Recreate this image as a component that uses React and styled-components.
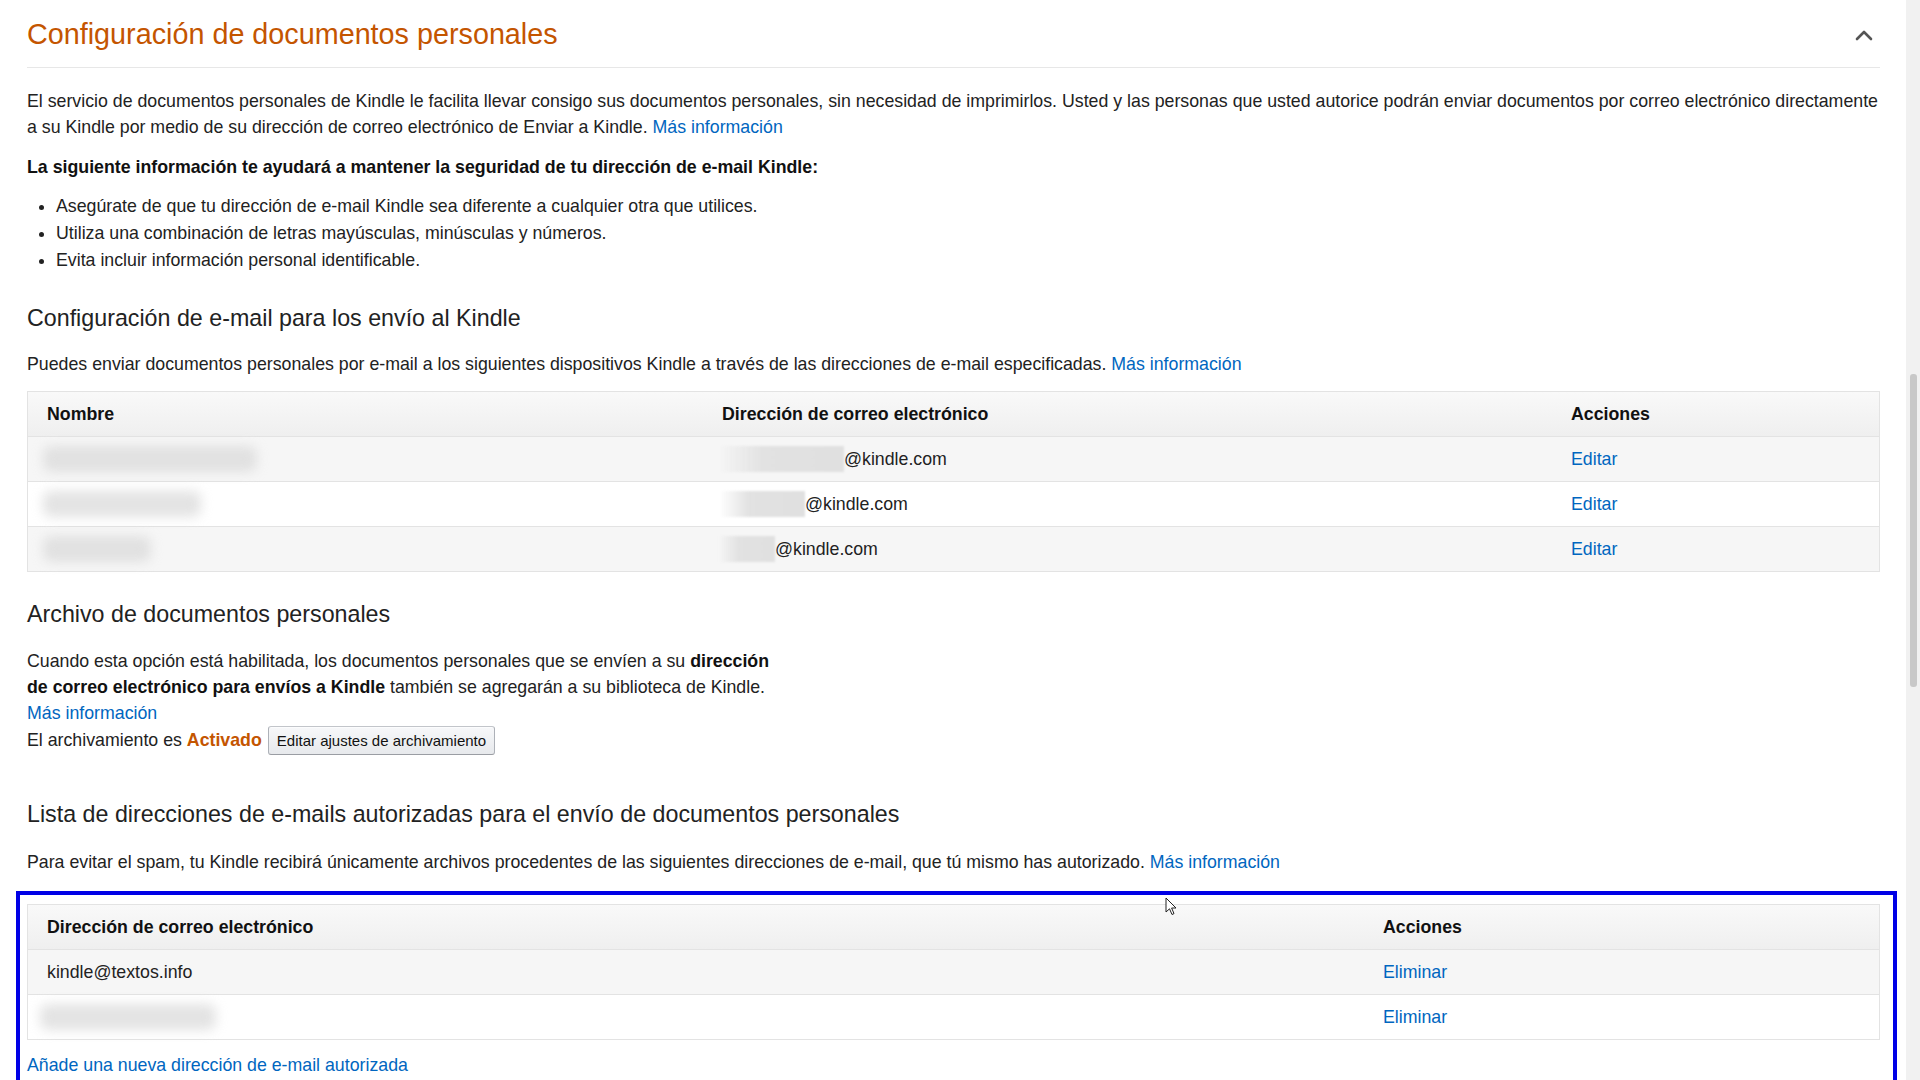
import React from 'react';
import styled, { createGlobalStyle } from 'styled-components';

const GlobalStyle = createGlobalStyle`
  html, body {
    margin: 0;
    padding: 0;
    background: #fff;
    overflow: hidden;
  }
  body {
    font-family: "Liberation Sans", Arial, sans-serif;
    font-size: 17.75px;
    line-height: 26px;
    color: #222;
  }
  * {
    box-sizing: border-box;
  }
`;

const Page = styled.div`
  position: relative;
  display: flex;
  width: 1920px;
  height: 1080px;
  overflow: hidden;
`;

const Main = styled.div`
  flex: 1;
  padding: 0 26px 0 27px;
`;

const Scrollbar = styled.div`
  width: 14px;
  background: #f1f1f1;
  padding: 374px 3px 0 4px;
`;

const Thumb = styled.div`
  height: 313px;
  background: #c8c8c8;
  border-radius: 3px;
`;

const SectionHeader = styled.div`
  height: 68px;
  display: flex;
  align-items: center;
  justify-content: space-between;
  border-bottom: 1px solid #e7e7e7;
`;

const Title = styled.h1`
  margin: 0;
  font-size: 28.75px;
  line-height: 36px;
  font-weight: 400;
  color: #c45500;
`;

const Chevron = styled.svg`
  width: 18px;
  height: 12px;
  margin-right: 7px;
  margin-top: 3px;
`;

const Paragraph = styled.p`
  margin: ${p => p.$mt || 0}px 0 0;
  max-width: ${p => (p.$narrow ? '765px' : 'none')};
`;

const Strong = styled.p`
  margin: 14px 0 0;
  font-weight: 700;
  color: #111;
`;

const Bullets = styled.ul`
  margin: 13px 0 0;
  padding-left: 29px;

  li {
    margin-bottom: 1px;
  }
`;

const SubTitle = styled.h2`
  margin: ${p => p.$mt}px 0 0;
  font-size: 23.25px;
  line-height: 30px;
  font-weight: 400;
  color: #222;
`;

const Link = styled.a`
  color: #0066c0;
  text-decoration: none;
  cursor: pointer;
  display: ${p => (p.$block ? 'block' : 'inline')};
`;

const Bold = styled.b`
  font-weight: 700;
  color: #111;
`;

const Status = styled.b`
  font-weight: 700;
  color: #c45500;
`;

const ArchiveLine = styled.div`
  display: flex;
  align-items: center;
  height: 28px;
`;

const Button = styled.button`
  margin-left: 6px;
  height: 29px;
  padding: 0 8px;
  font-family: inherit;
  font-size: 15px;
  color: #111;
  border: 1px solid #adb1b8;
  border-top-color: #c2c5ca;
  border-bottom-color: #9a9da3;
  border-radius: 3px;
  background: linear-gradient(to bottom, #f7f8fa, #e7e9ec);
  box-shadow: 0 1px 0 rgba(255, 255, 255, 0.6) inset;
`;

const Table = styled.div`
  margin-top: ${p => p.$mt || 0}px;
  border: 1px solid #e3e3e3;
`;

const Row = styled.div`
  display: grid;
  grid-template-columns: ${p => p.$cols};
  align-items: center;
  height: ${p => (p.$head ? 44 : 45)}px;
  border-top: ${p => (p.$head ? 'none' : '1px solid #e3e3e3')};
  background: ${p =>
    p.$head
      ? 'linear-gradient(to bottom, #f9f9f9, #efefef)'
      : p.$striped
      ? '#f6f6f6'
      : '#fff'};
  font-weight: ${p => (p.$head ? 700 : 400)};
  color: ${p => (p.$head ? '#111' : '#222')};
`;

const Cell = styled.div`
  padding-left: 19px;
  display: flex;
  align-items: center;
  white-space: nowrap;
`;

const NameBlur = styled.span`
  display: inline-block;
  width: ${p => p.$w}px;
  height: 26px;
  margin-left: ${p => p.$ml || -4}px;
  background: #dadada;
  border-radius: 8px;
  filter: blur(6px);
  opacity: 0.75;
`;

const MailBlur = styled.span`
  display: inline-block;
  width: ${p => p.$w}px;
  height: 26px;
  margin-left: -3px;
  background: linear-gradient(to right, rgba(226, 226, 226, 0), #e2e2e2 35%, #e0e0e0);
  filter: blur(1px);
`;

const Highlight = styled.div`
  margin: 15.5px -17px 0 -11px;
  padding: 9px 13px 20px 7px;
  border: 4px solid #0000e6;
  border-bottom: none;
`;

const AddLink = styled(Link)`
  display: block;
  margin-top: 12px;
`;

const Cursor = styled.svg`
  position: absolute;
  left: 1165px;
  top: 897px;
  width: 12px;
  height: 19px;
`;

const devices = [
  { name: 214, mail: 125 },
  { name: 158, mail: 86 },
  { name: 108, mail: 56 },
];

const cols1 = '675px 849px 1fr';
const cols2 = '1336px 1fr';

function App() {
  return (
    <Page>
      <GlobalStyle />
      <Main>
        <SectionHeader>
          <Title>Configuración de documentos personales</Title>
          <Chevron viewBox="0 0 18 12">
            <path d="M2 10 L9 3 L16 10" fill="none" stroke="#555" strokeWidth="2.6" strokeLinecap="round" strokeLinejoin="round" />
          </Chevron>
        </SectionHeader>

        <Paragraph $mt={20}>
          El servicio de documentos personales de Kindle le facilita llevar consigo sus documentos personales, sin necesidad de imprimirlos. Usted y las personas que usted autorice podrán enviar documentos por correo electrónico directamente a su Kindle por medio de su dirección de correo electrónico de Enviar a Kindle. <Link>Más información</Link>
        </Paragraph>

        <Strong>La siguiente información te ayudará a mantener la seguridad de tu dirección de e-mail Kindle:</Strong>

        <Bullets>
          <li>Asegúrate de que tu dirección de e-mail Kindle sea diferente a cualquier otra que utilices.</li>
          <li>Utiliza una combinación de letras mayúsculas, minúsculas y números.</li>
          <li>Evita incluir información personal identificable.</li>
        </Bullets>

        <SubTitle $mt={30}>Configuración de e-mail para los envío al Kindle</SubTitle>
        <Paragraph $mt={18}>
          Puedes enviar documentos personales por e-mail a los siguientes dispositivos Kindle a través de las direcciones de e-mail especificadas. <Link>Más información</Link>
        </Paragraph>

        <Table $mt={14}>
          <Row $head $cols={cols1}>
            <Cell>Nombre</Cell>
            <Cell>Dirección de correo electrónico</Cell>
            <Cell>Acciones</Cell>
          </Row>
          {devices.map((d, i) => (
            <Row key={i} $cols={cols1} $striped={i % 2 === 0}>
              <Cell>
                <NameBlur $w={d.name} />
              </Cell>
              <Cell>
                <MailBlur $w={d.mail} />
                @kindle.com
              </Cell>
              <Cell>
                <Link>Editar</Link>
              </Cell>
            </Row>
          ))}
        </Table>

        <SubTitle $mt={27}>Archivo de documentos personales</SubTitle>
        <Paragraph $mt={19} $narrow>
          Cuando esta opción está habilitada, los documentos personales que se envíen a su <Bold>dirección de correo electrónico para envíos a Kindle</Bold> también se agregarán a su biblioteca de Kindle.
          <Link $block>Más información</Link>
        </Paragraph>
        <ArchiveLine>
          El archivamiento es&nbsp;<Status>Activado</Status>
          <Button>Editar ajustes de archivamiento</Button>
        </ArchiveLine>

        <SubTitle $mt={45}>Lista de direcciones de e-mails autorizadas para el envío de documentos personales</SubTitle>
        <Paragraph $mt={20}>
          Para evitar el spam, tu Kindle recibirá únicamente archivos procedentes de las siguientes direcciones de e-mail, que tú mismo has autorizado. <Link>Más información</Link>
        </Paragraph>

        <Highlight>
          <Table>
            <Row $head $cols={cols2}>
              <Cell>Dirección de correo electrónico</Cell>
              <Cell>Acciones</Cell>
            </Row>
            <Row $cols={cols2} $striped>
              <Cell>kindle@textos.info</Cell>
              <Cell>
                <Link>Eliminar</Link>
              </Cell>
            </Row>
            <Row $cols={cols2}>
              <Cell>
                <NameBlur $w={176} $ml={-7} />
              </Cell>
              <Cell>
                <Link>Eliminar</Link>
              </Cell>
            </Row>
          </Table>
          <AddLink>Añade una nueva dirección de e-mail autorizada</AddLink>
        </Highlight>
      </Main>
      <Scrollbar>
        <Thumb />
      </Scrollbar>
      <Cursor viewBox="0 0 12 19">
        <path d="M1 1 L1 15 L4.5 11.8 L7 17.5 L9 16.6 L6.6 11 L11 11 Z" fill="#fff" stroke="#222" strokeWidth="1" strokeLinejoin="round" />
      </Cursor>
    </Page>
  );
}

export default App;
